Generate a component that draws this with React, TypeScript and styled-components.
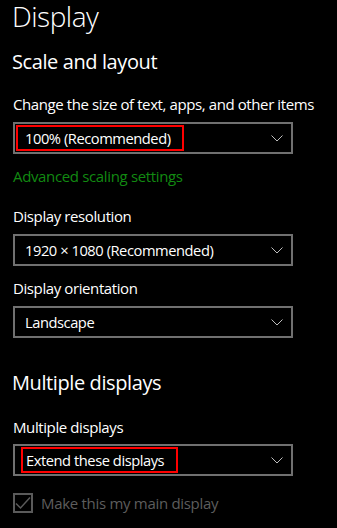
import styled, { createGlobalStyle } from "styled-components";

const GlobalStyle = createGlobalStyle`
    html, body {
        margin: 0;
        padding: 0;
        background-color: #000000;
    }
    body {
        font-family: "Open Sans", "Noto Sans", sans-serif;
        color: #ffffff;
    }
`;

const Settings__page = styled.div`
    display: flex;
    flex-direction: column;
    align-items: flex-start;
    width: 337px;
    min-height: 528px;
    padding: 2px 13px 0;
    box-sizing: border-box;
`;

const Settings__title = styled.h1`
    margin: 0 0 0 -1px;
    font-size: 28px;
    font-weight: 300;
    line-height: 28px;
    letter-spacing: -0.5px;
`;

const Settings__section_title = styled.h2<{ $top: number }>`
    margin: ${(p) => p.$top}px 0 0 -1px;
    font-size: 20px;
    font-weight: 400;
    line-height: 26px;
    letter-spacing: -0.4px;
`;

const Settings__label = styled.span<{ $top: number }>`
    display: block;
    margin-top: ${(p) => p.$top}px;
    font-size: 15px;
    line-height: 20px;
    letter-spacing: -0.4px;
    white-space: nowrap;
`;

const Settings__select = styled.div<{ $top: number }>`
    display: flex;
    align-items: center;
    justify-content: space-between;
    width: 280px;
    height: 32px;
    margin-top: ${(p) => p.$top}px;
    padding: 0 8px 0 0;
    box-sizing: border-box;
    border: 2px solid #707070;
`;

const Settings__select_value = styled.span<{ $outlined?: boolean; $shift: number; $left: number; $right: number }>`
    display: flex;
    align-items: center;
    height: 26px;
    margin-left: ${(p) => p.$shift}px;
    padding: 0 ${(p) => p.$right}px 0 ${(p) => p.$left}px;
    box-sizing: border-box;
    border: 2px solid ${(p) => (p.$outlined ? "#ff0000" : "transparent")};
    font-size: 14.7px;
    line-height: 20px;
    letter-spacing: -0.45px;
    white-space: nowrap;
`;

const Settings__chevron = styled.svg`
    flex-shrink: 0;
`;

const Settings__link = styled.span`
    display: block;
    margin-top: 12px;
    font-size: 15px;
    line-height: 20px;
    letter-spacing: -0.35px;
    color: #128a12;
`;

const Settings__checkbox_row = styled.div`
    display: flex;
    align-items: center;
    column-gap: 8px;
    margin-top: 17px;
    color: #5d5d5d;
`;

const Settings__checkbox = styled.span`
    display: flex;
    justify-content: center;
    align-items: center;
    width: 20px;
    height: 20px;
    box-sizing: border-box;
    border: 2px solid #5a5a5a;
`;

const Settings__checkbox_label = styled.span`
    font-size: 15px;
    line-height: 20px;
    letter-spacing: -0.3px;
`;

function Chevron() {
    return (
        <Settings__chevron width="12" height="7" viewBox="0 0 12 7">
            <polyline points="0.5,0.5 6,6 11.5,0.5" fill="none" stroke="#bdbdbd" strokeWidth="1" />
        </Settings__chevron>
    );
}

type SelectProps = {
    value: string;
    top: number;
    outline?: { shift: number; left: number; right: number };
};

function Select({ value, top, outline }: SelectProps) {
    return (
        <Settings__select $top={top}>
            <Settings__select_value
                $outlined={!!outline}
                $shift={outline ? outline.shift : 1}
                $left={outline ? outline.left : 7}
                $right={outline ? outline.right : 0}
            >
                {value}
            </Settings__select_value>
            <Chevron />
        </Settings__select>
    );
}

export default function App() {
    return (
        <>
            <GlobalStyle />
            <Settings__page>
                <Settings__title>Display</Settings__title>
                <Settings__section_title $top={19}>Scale and layout</Settings__section_title>
                <Settings__label $top={19}>Change the size of text, apps, and other items</Settings__label>
                <Select top={8} value="100% (Recommended)" outline={{ shift: 1, left: 7, right: 11 }} />
                <Settings__link>Advanced scaling settings</Settings__link>
                <Settings__label $top={20}>Display resolution</Settings__label>
                <Select top={8} value="1920 × 1080 (Recommended)" />
                <Settings__label $top={12}>Display orientation</Settings__label>
                <Select top={8} value="Landscape" />
                <Settings__section_title $top={32}>Multiple displays</Settings__section_title>
                <Settings__label $top={21}>Multiple displays</Settings__label>
                <Select top={7} value="Extend these displays" outline={{ shift: 6, left: 3, right: 12 }} />
                <Settings__checkbox_row>
                    <Settings__checkbox>
                        <svg width="16" height="14" viewBox="0 0 16 14">
                            <polyline points="1,7.5 5.5,12 15,1.5" fill="none" stroke="#5a5a5a" strokeWidth="1.5" />
                        </svg>
                    </Settings__checkbox>
                    <Settings__checkbox_label>Make this my main display</Settings__checkbox_label>
                </Settings__checkbox_row>
            </Settings__page>
        </>
    );
}
